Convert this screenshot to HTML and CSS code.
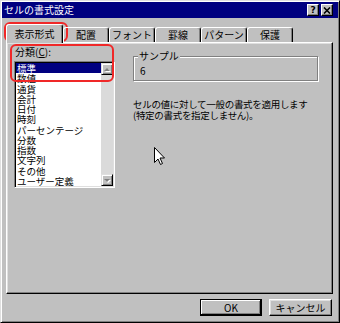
FILE: index.html
```html
<!DOCTYPE html>
<html lang="ja">
<head>
    <meta charset="UTF-8">
    <title>セルの書式設定</title>
    <link rel="stylesheet" href="styles.css">
</head>
<body>
    <div class="window">
        <div class="titlebar">
            <span class="title">セルの書式設定</span>
            <div class="title-buttons">
                <span class="tbtn">?</span>
                <span class="tbtn">
                    <svg width="8" height="7" viewBox="0 0 8 7"><path d="M1 0.5 L7 6.5 M7 0.5 L1 6.5" stroke="#000" stroke-width="1.6"/></svg>
                </span>
            </div>
        </div>

        <div class="content">
            <div class="tabs">
                <div class="tab active">表示形式</div>
                <div class="tab">配置</div>
                <div class="tab">フォント</div>
                <div class="tab">罫線</div>
                <div class="tab">パターン</div>
                <div class="tab">保護</div>
            </div>

            <div class="panel">
                <div class="col-left">
                    <div class="label">分類(<u>C</u>):</div>
                    <div class="listbox">
                        <ul class="items">
                            <li class="item selected">標準</li>
                            <li class="item">数値</li>
                            <li class="item">通貨</li>
                            <li class="item">会計</li>
                            <li class="item">日付</li>
                            <li class="item">時刻</li>
                            <li class="item">パーセンテージ</li>
                            <li class="item">分数</li>
                            <li class="item">指数</li>
                            <li class="item">文字列</li>
                            <li class="item">その他</li>
                            <li class="item">ユーザー定義</li>
                        </ul>
                        <div class="scrollbar">
                            <span class="sb-btn up"></span>
                            <span class="sb-track"></span>
                            <span class="sb-btn down"></span>
                        </div>
                    </div>
                </div>

                <div class="col-right">
                    <div class="sample">
                        <span class="sample-label">サンプル</span>
                        6
                    </div>
                    <p class="desc">セルの値に対して一般の書式を適用します<br>(特定の書式を指定しません)。</p>
                </div>
            </div>

            <div class="actions">
                <button class="btn default">OK</button>
                <button class="btn">キャンセル</button>
            </div>
        </div>

        <!-- red annotation marks -->
        <div class="mark mark-tab"></div>
        <div class="mark mark-list"></div>

        <svg class="cursor" width="12" height="19" viewBox="0 0 12 19">
            <path d="M0.5 0.5 L0.5 15.5 L4 12 L6.5 17.5 L8.5 16.5 L6 11 L10.5 11 Z" fill="#fff" stroke="#000" stroke-width="1"/>
        </svg>
    </div>
</body>
</html>
```

FILE: styles.css
```css
* {
    margin: 0;
    padding: 0;
    box-sizing: border-box;
}

body {
    font-family: "Noto Sans CJK JP", "Noto Sans", sans-serif;
    font-size: 10px;
    color: #000;
    background: #c0c0c0;
}

/* Window frame */
.window {
    position: relative;
    width: 340px;
    height: 323px;
    padding: 1px;
    background: #c0c0c0;
    border: 1px solid;
    border-color: #dfdfdf #000 #000 #dfdfdf;
    box-shadow: inset 1px 1px #fff, inset -1px -1px #808080;
    display: flex;
    flex-direction: column;
}

/* Title bar */
.titlebar {
    height: 16px;
    padding: 0 5px 0 2px;
    background: #000080;
    color: #fff;
    display: flex;
    align-items: center;
    justify-content: space-between;
}

.title {
    font-size: 10px;
    line-height: 16px;
}

.title-buttons {
    display: flex;
    gap: 2px;
}

.tbtn {
    width: 12px;
    height: 12px;
    background: #c0c0c0;
    border: 1px solid;
    border-color: #fff #000 #000 #fff;
    box-shadow: inset -1px -1px #808080;
    display: flex;
    align-items: center;
    justify-content: center;
    color: #000;
    font: bold 9px "DejaVu Sans", sans-serif;
}

/* Content */
.content {
    flex: 1;
    padding: 6px 5px 0 4px;
    display: flex;
    flex-direction: column;
}

.tabs {
    position: relative;
    z-index: 1;
    height: 18px;
    display: flex;
    align-items: flex-end;
}

.tab {
    width: 46px;
    height: 15px;
    border: 1px solid;
    border-bottom: none;
    border-color: #fff #000 transparent #fff;
    border-radius: 3px 3px 0 0;
    box-shadow: inset -1px 0 #808080;
    text-align: center;
    line-height: 14px;
    white-space: nowrap;
}

.tab.active {
    width: 57px;
    height: 19px;
    margin-bottom: -1px;
    background: #c0c0c0;
    line-height: 17px;
}

.panel {
    height: 252px;
    padding: 3px 14px 0 7px;
    border: 1px solid;
    border-color: #fff #000 #000 #fff;
    box-shadow: inset -1px -1px #808080, inset 1px 1px #dfdfdf;
    display: flex;
    gap: 18px;
}

/* Category list */
.col-left {
    width: 101px;
    display: flex;
    flex-direction: column;
}

.label {
    height: 12px;
    line-height: 12px;
    padding-left: 1px;
    margin-bottom: 3px;
}

.listbox {
    height: 127px;
    padding: 1px;
    background: #fff;
    border: 1px solid;
    border-color: #808080 #fff #fff #808080;
    box-shadow: inset 1px 1px #000, inset -1px -1px #dfdfdf;
    display: flex;
}

.items {
    flex: 1;
    list-style: none;
}

.item {
    height: 10.25px;
    font-size: 9.5px;
    line-height: 10.25px;
    padding-left: 1px;
    white-space: nowrap;
}

.item.selected {
    background: #000080;
    color: #fff;
}

.scrollbar {
    width: 12px;
    background: #dadada;
    display: flex;
    flex-direction: column;
}

.sb-track {
    flex: 1;
}

.sb-btn {
    height: 12px;
    background: #c0c0c0;
    border: 1px solid;
    border-color: #dfdfdf #000 #000 #dfdfdf;
    box-shadow: inset 1px 1px #fff, inset -1px -1px #808080;
    display: flex;
    align-items: center;
    justify-content: center;
}

.sb-btn::before {
    content: "";
    border-left: 3px solid transparent;
    border-right: 3px solid transparent;
    filter: drop-shadow(1px 1px 0 #fff);
}

.sb-btn.up::before {
    border-bottom: 3px solid #808080;
}

.sb-btn.down::before {
    border-top: 3px solid #808080;
}

/* Sample and description */
.col-right {
    flex: 1;
    padding-top: 10px;
}

.sample {
    position: relative;
    height: 25px;
    padding: 7px 0 0 6px;
    line-height: 13px;
    border: 1px solid #808080;
    box-shadow: inset 1px 1px #fff, 1px 1px #fff;
}

.sample-label {
    position: absolute;
    top: -7px;
    left: 4px;
    padding: 0 1px;
    background: #c0c0c0;
    line-height: 12px;
}

.desc {
    margin-top: 18px;
    font-size: 9.5px;
    letter-spacing: -0.3px;
    line-height: 11px;
    white-space: nowrap;
}

/* Dialog buttons */
.actions {
    margin-top: 5px;
    padding-right: 1px;
    display: flex;
    justify-content: flex-end;
    gap: 7px;
}

.btn {
    width: 63px;
    height: 17px;
    font: inherit;
    color: #000;
    background: #c0c0c0;
    border: 1px solid;
    border-color: #fff #000 #000 #fff;
    box-shadow: inset -1px -1px #808080, inset 1px 1px #dfdfdf;
}

.btn.default {
    width: 62px;
    border-color: #000;
    box-shadow: inset -1px -1px #000, inset 1px 1px #fff, inset -2px -2px #808080;
}

/* Annotation marks */
.mark {
    position: absolute;
    border: 2px solid #f02828;
    border-radius: 6px;
    pointer-events: none;
}

.mark-tab {
    left: 3px;
    top: 21px;
    width: 64px;
    height: 20px;
}

.mark-list {
    left: 9px;
    top: 43px;
    width: 104px;
    height: 38px;
}

.cursor {
    position: absolute;
    left: 153px;
    top: 146px;
}
```
